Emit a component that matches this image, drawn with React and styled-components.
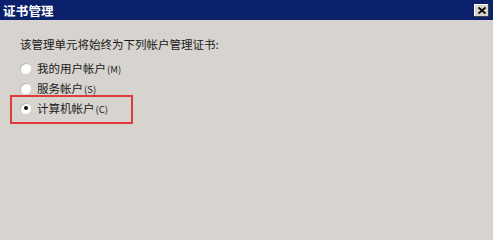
import React from 'react';
import styled, { createGlobalStyle } from 'styled-components';

const GlobalStyle = createGlobalStyle`
    html, body {
        margin: 0;
        padding: 0;
        width: 493px;
        height: 240px;
        overflow: hidden;
        background: #d7d4cf;
    }
`;

const Window = styled.div`
    width: 493px;
    height: 240px;
    background: #d7d4cf;
    font-family: "Noto Sans CJK SC", "Liberation Sans", sans-serif;
    color: #1a1a1a;
    display: flex;
    flex-direction: column;
`;

const TitleBar = styled.div`
    height: 20px;
    background: #0c216b;
    display: flex;
    align-items: center;
    justify-content: space-between;
    padding: 0 4px 0 3px;

    h5 {
        margin: 0;
        font-size: 12.5px;
        font-weight: 700;
        color: #fff;
        letter-spacing: 0.2px;
    }
`;

const CloseButton = styled.button`
    width: 15px;
    height: 13px;
    padding: 0;
    border: none;
    background: #d7d4cf;
    box-shadow: inset -1px -1px #404040, inset 1px 1px #fff;
    display: flex;
    align-items: center;
    justify-content: center;
`;

const Content = styled.div`
    padding: 17px 0 0 20px;
    display: flex;
    flex-direction: column;
`;

const Prompt = styled.div`
    font-size: 11.5px;
    line-height: 14px;
    margin-bottom: 7px;
`;

const OptionList = styled.div`
    display: flex;
    flex-direction: column;
`;

const OptionRow = styled.div`
    height: 20px;
    display: flex;
    align-items: center;
    gap: 6px;
    font-size: 11.5px;
    position: relative;

    small {
        font-size: 9.5px;
        margin-left: 1px;
    }
`;

const Highlight = styled.div`
    position: absolute;
    left: -10px;
    top: -3px;
    width: 119px;
    height: 25px;
    border: 2px solid #e23a3a;
    pointer-events: none;
`;

const Radio = styled.span`
    width: 11px;
    height: 11px;
    border-radius: 50%;
    background: #fff;
    box-shadow: inset 1px 1px 0 #b9b6b0;
    display: flex;
    align-items: center;
    justify-content: center;

    &::after {
        content: '';
        width: 4px;
        height: 4px;
        border-radius: 50%;
        background: ${p => (p.$checked ? '#111' : 'transparent')};
    }
`;

const options = [
    { label: '我的用户帐户', key: 'M' },
    { label: '服务帐户', key: 'S' },
    { label: '计算机帐户', key: 'C', checked: true },
];

function App() {
    return (
        <Window>
            <GlobalStyle />
            <TitleBar>
                <h5>证书管理</h5>
                <CloseButton>
                    <svg width="8" height="7" viewBox="0 0 8 7">
                        <path d="M0.5 0.5 L7.5 6.5 M7.5 0.5 L0.5 6.5" stroke="#000" strokeWidth="1.8" />
                    </svg>
                </CloseButton>
            </TitleBar>

            <Content>
                <Prompt>该管理单元将始终为下列帐户管理证书:</Prompt>
                <OptionList>
                    {options.map(o => (
                        <OptionRow key={o.key}>
                            {o.checked && <Highlight />}
                            <Radio $checked={o.checked} />
                            <span>
                                {o.label}
                                <small>({o.key})</small>
                            </span>
                        </OptionRow>
                    ))}
                </OptionList>
            </Content>
        </Window>
    );
}

export default App;
